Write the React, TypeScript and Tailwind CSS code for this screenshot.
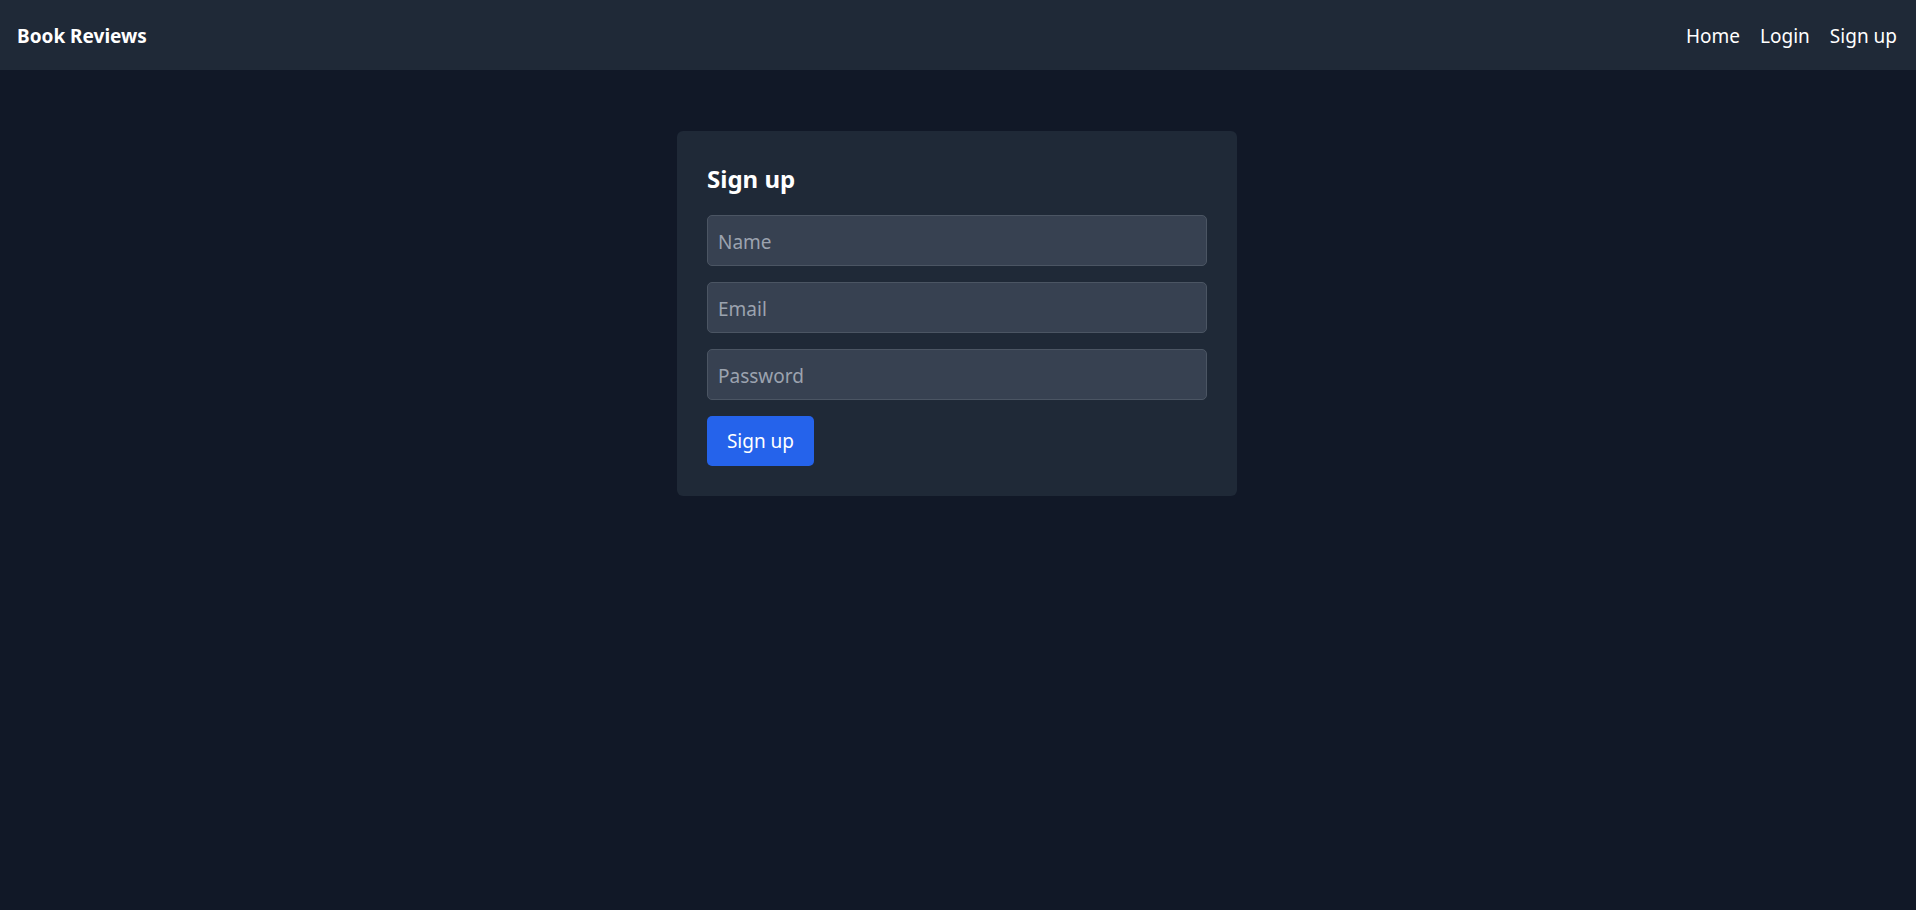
export default function App() {
  return (
    <div className="min-h-screen bg-[#111827] font-['Noto_Sans',sans-serif] text-white">
      <header className="flex h-[70px] items-center justify-between bg-[#1f2937] pt-[2px] pl-[17px] pr-[19px]">
        <a href="#" className="text-[19px] font-bold">
          Book Reviews
        </a>
        <nav className="flex items-center gap-[20px] text-[19px]">
          <a href="#">Home</a>
          <a href="#">Login</a>
          <a href="#">Sign up</a>
        </nav>
      </header>

      <main className="flex justify-center pt-[61px] pr-[2px]">
        <section className="w-[560px] rounded-[6px] bg-[#1f2937] p-[30px]">
          <h1 className="mb-[18px] text-[24px] leading-[36px] font-bold">Sign up</h1>
          <form className="flex flex-col gap-4">
            <input
              type="text"
              placeholder="Name"
              className="h-[51px] w-full rounded-[5px] border border-[#4b5563] bg-[#374151] px-[10px] pt-[2px] text-[19px] text-white outline-none placeholder:text-[#9ca3af]"
            />
            <input
              type="email"
              placeholder="Email"
              className="h-[51px] w-full rounded-[5px] border border-[#4b5563] bg-[#374151] px-[10px] pt-[2px] text-[19px] text-white outline-none placeholder:text-[#9ca3af]"
            />
            <input
              type="password"
              placeholder="Password"
              className="h-[51px] w-full rounded-[5px] border border-[#4b5563] bg-[#374151] px-[10px] pt-[2px] text-[19px] text-white outline-none placeholder:text-[#9ca3af]"
            />
            <div>
              <button
                type="button"
                className="h-[50px] w-[107px] rounded-[5px] bg-[#2563eb] text-[19px] text-white"
              >
                Sign up
              </button>
            </div>
          </form>
        </section>
      </main>
    </div>
  );
}
